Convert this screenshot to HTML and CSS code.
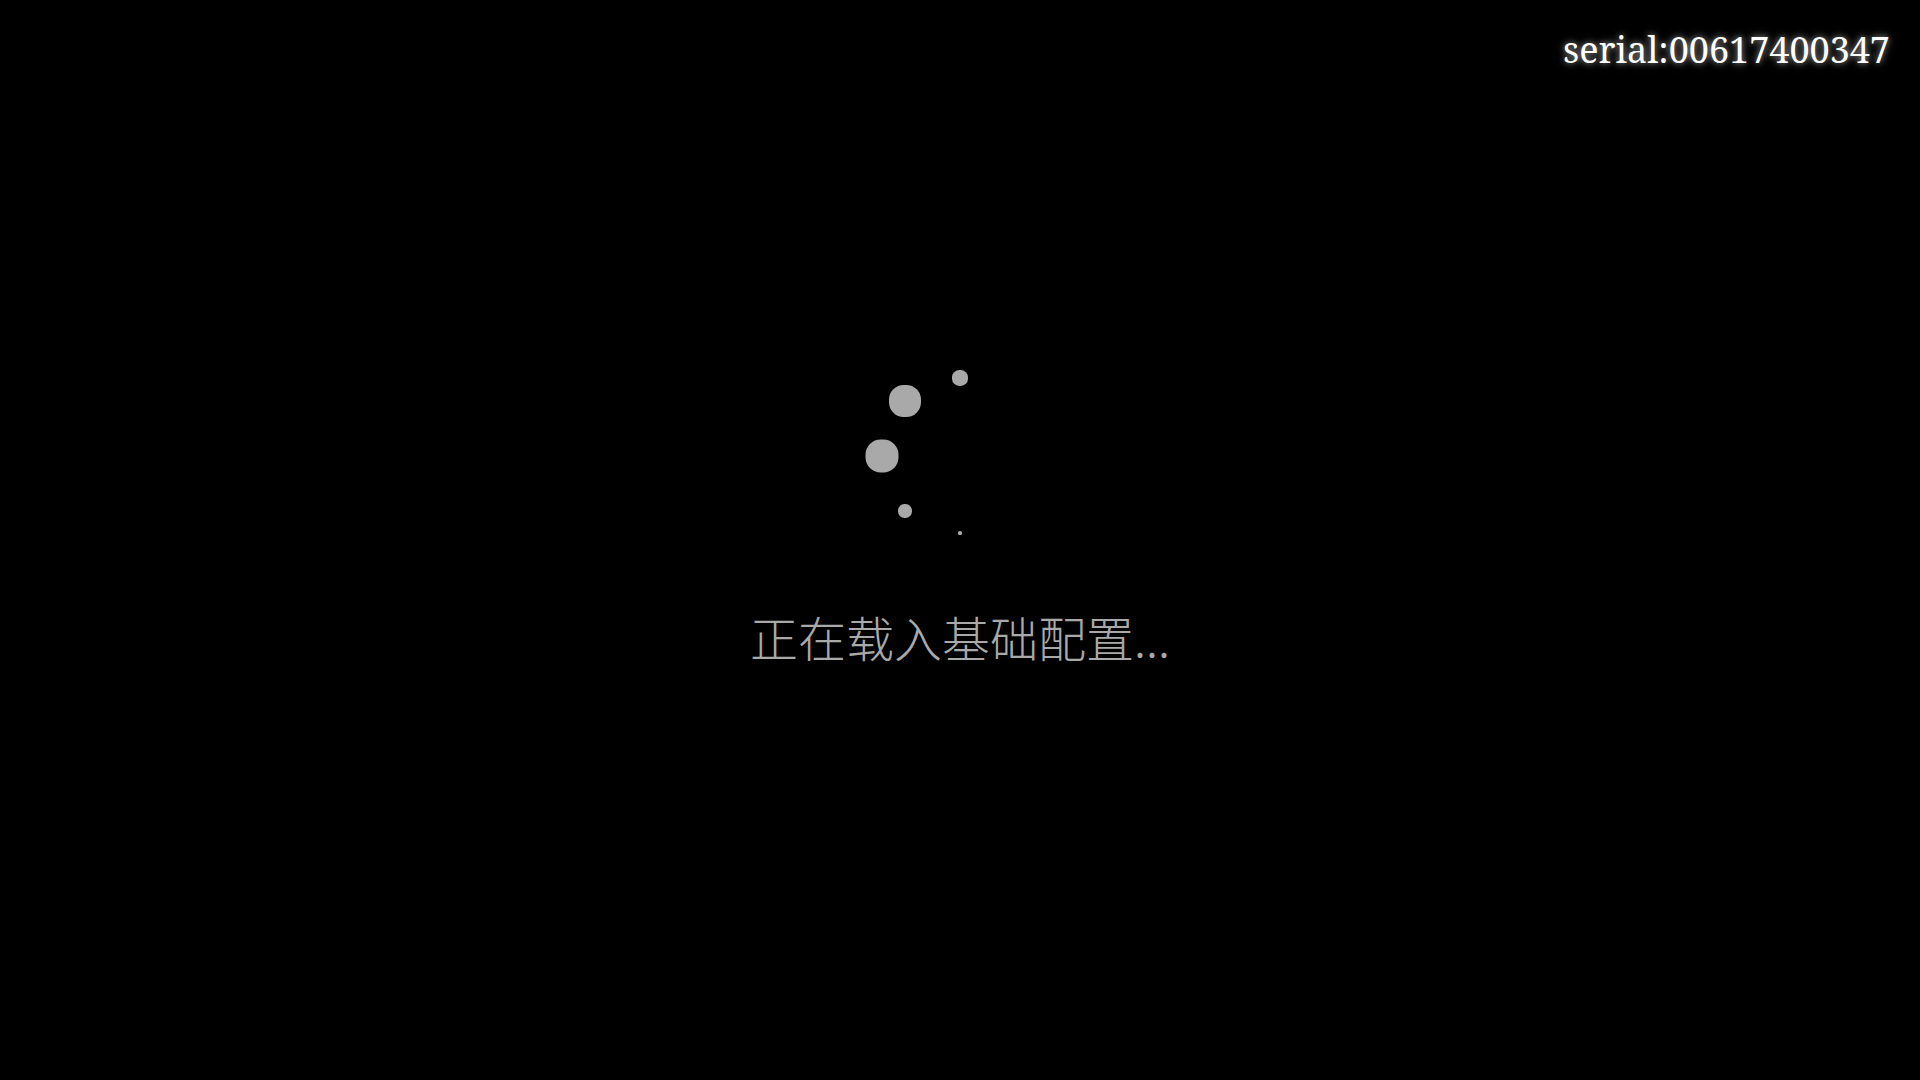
FILE: index.html
```html
<!DOCTYPE html>
<html lang="zh-CN">
<head>
<meta charset="utf-8">
<title>Loading</title>
<link rel="stylesheet" href="styles.css">
</head>
<body>
<div class="screen">
  <div class="serial">serial:00617400347</div>
  <main class="stage">
    <div class="spinner" aria-hidden="true">
      <span class="dot d1"></span>
      <span class="dot d2"></span>
      <span class="dot d3"></span>
      <span class="dot d4"></span>
      <span class="dot d5"></span>
    </div>
    <p class="message">正在载入基础配置...</p>
  </main>
</div>
</body>
</html>
```

FILE: styles.css
```css
html, body {
  margin: 0;
  padding: 0;
  background: #000;
}

.screen {
  position: relative;
  width: 100vw;
  height: 100vh;
  overflow: hidden;
  background: #000;
}

.serial {
  position: absolute;
  top: 25px;
  right: 30px;
  font-family: "Noto Serif", "DejaVu Serif", "Liberation Serif", serif;
  font-size: 36px;
  color: #fff;
  text-shadow: 0 0 6px rgba(255, 255, 255, 0.55), 0 0 12px rgba(255, 255, 255, 0.25);
}

.stage {
  display: flex;
  flex-direction: column;
  align-items: center;
  padding-top: 366px;
}

.spinner {
  position: relative;
  width: 180px;
  height: 180px;
}

.dot {
  position: absolute;
  background: #a9a9a9;
  border-radius: 46%;
  transform: translate(-50%, -50%);
}

.d1 { left: 90px; top: 12px; width: 16px; height: 16px; }
.d2 { left: 35px; top: 35px; width: 32px; height: 32px; }
.d3 { left: 12px; top: 90px; width: 33px; height: 33px; }
.d4 { left: 35px; top: 145px; width: 14px; height: 14px; }
.d5 { left: 90px; top: 167px; width: 4px; height: 4px; }

.message {
  margin: 62px 0 0;
  font-family: "Noto Sans CJK SC", "Noto Sans", sans-serif;
  font-size: 48px;
  font-weight: 300;
  line-height: 56px;
  color: #a9a9a9;
}
```
